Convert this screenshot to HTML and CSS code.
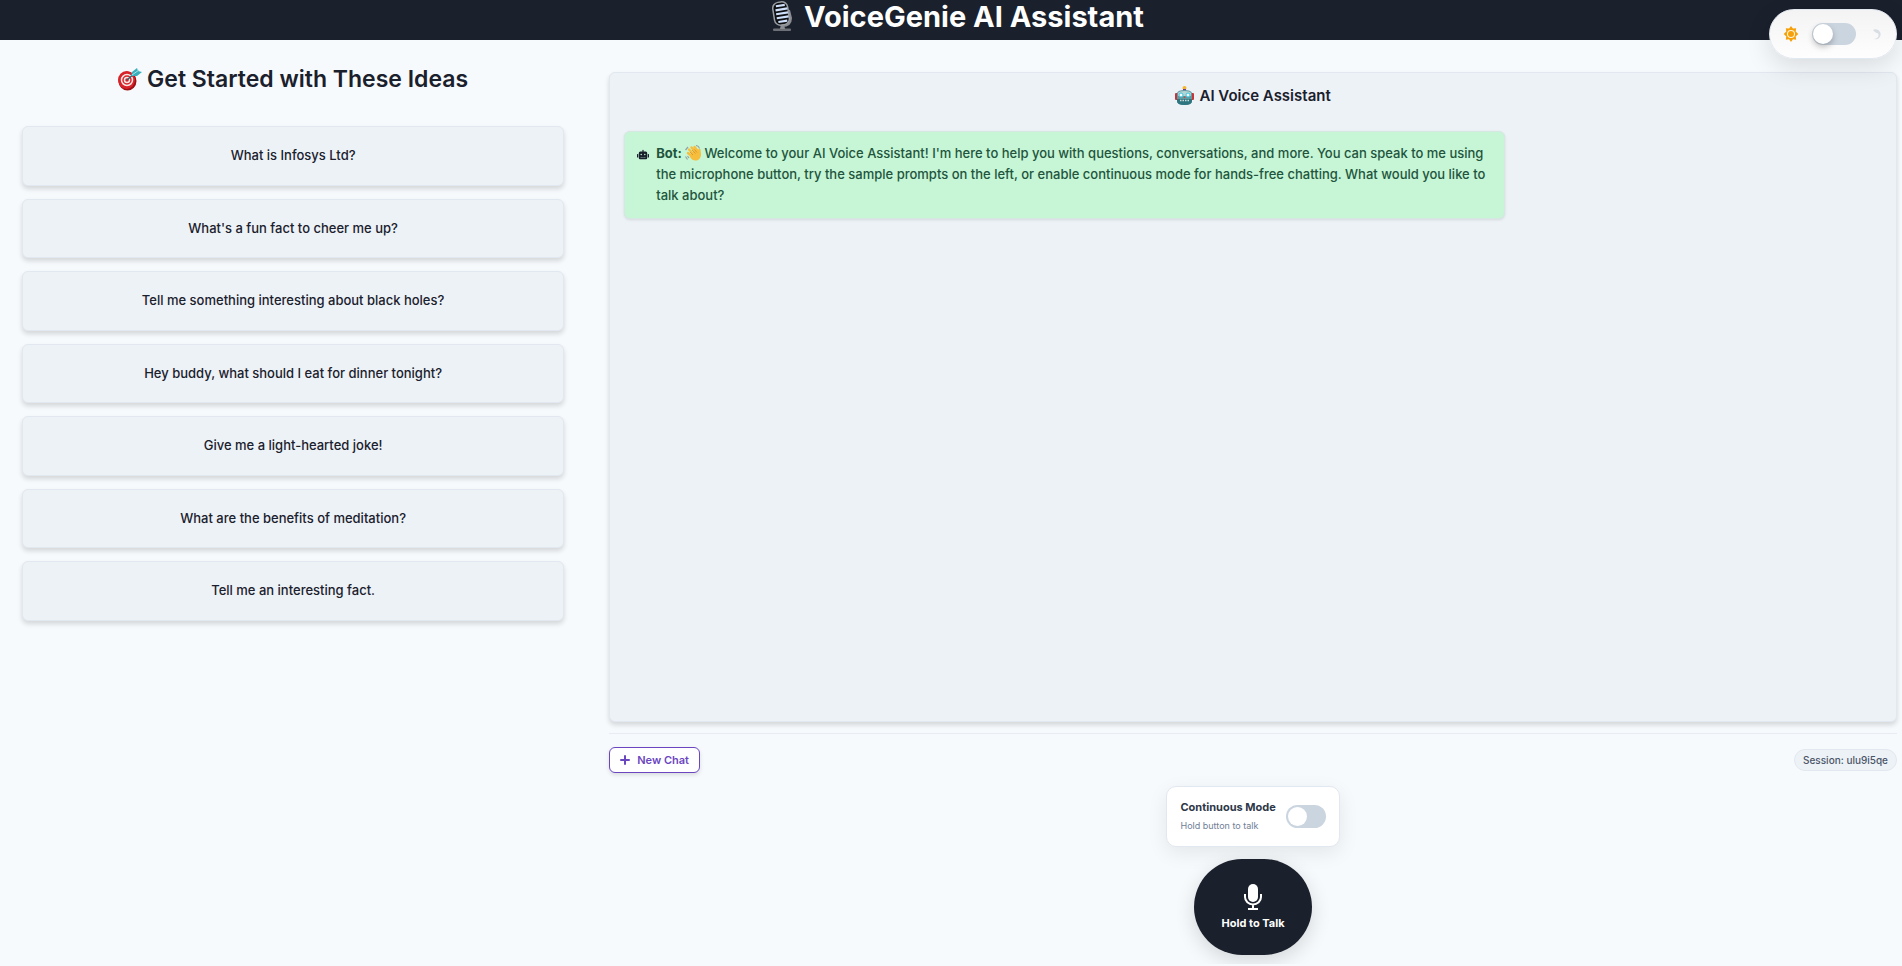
FILE: index.html
```html
<!DOCTYPE html>
<html lang="en">
<head>
<meta charset="utf-8">
<meta name="viewport" content="width=device-width, initial-scale=1">
<title>VoiceGenie AI Assistant</title>
<link rel="stylesheet" href="styles.css">
</head>
<body>
<header class="site-header">
  <h1 class="site-title">
    <svg class="icon-studio" viewBox="0 0 20 30" aria-hidden="true">
      <rect x="1" y="27.500" width="18" height="2.500" rx="1" fill="#6d7076"/>
      <path d="M9 23h3l1 5H8z" fill="#8b8e93"/>
      <path d="M17 9l2 8q0 8-9 8" fill="none" stroke="#8b8e93" stroke-width="2"/>
      <g transform="rotate(-9 9 12)">
        <rect x="1.500" y="1" width="15" height="23" rx="6" fill="#0d0f13" stroke="#9b9fa4" stroke-width="1.500"/>
        <path d="M5 4.500h9M4 8.500h12M4 12.500h12M4 16.500h12M5 20.500h9" fill="none" stroke="#cfe0fa" stroke-width="2.200"/>
      </g>
    </svg>
    <span>VoiceGenie AI Assistant</span>
  </h1>
</header>

<div class="theme-switch">
  <svg class="icon-theme" viewBox="0 0 512 512" aria-hidden="true">
    <path fill="#f6a10b" d="M256 0l62 83 103-14-15 104 83 83-83 83 15 103-103-15-62 83-62-83-104 15 15-103-83-83 83-83-15-104 104 14z"/>
    <circle cx="256" cy="256" r="112" fill="none" stroke="#fff6e0" stroke-width="34"/>
  </svg>
  <input class="toggle toggle-theme" type="checkbox" aria-label="Dark theme">
  <svg class="icon-theme icon-moon" viewBox="0 0 16 16" aria-hidden="true"><path fill="#a0aec0" d="M4 4a5 5 0 1 1 1 9q6-1 4-6-2 1-5-3z"/></svg>
</div>

<main class="layout">
  <section class="ideas">
    <h2 class="ideas-title">
      <svg class="icon-target" viewBox="0 0 24 24" aria-hidden="true">
        <ellipse cx="9.500" cy="14" rx="9" ry="9.500" fill="#9d1016"/>
        <ellipse cx="8.500" cy="13" rx="8.500" ry="9" fill="#d9232a"/>
        <circle cx="9" cy="13" r="5.500" fill="none" stroke="#f4e9e6" stroke-width="1.500"/>
        <circle cx="9" cy="13" r="2.500" fill="none" stroke="#f4e9e6" stroke-width="1.500"/>
        <path d="M9 13l8-7" stroke="#34606b" stroke-width="1.500"/>
        <path d="M13 9l1-4 5-4 1 3 4 1-5 4z" fill="#3aaebc"/>
        <path d="M14 8l7-5" stroke="#a4e4e8"/>
      </svg>
      <span>Get Started with These Ideas</span>
    </h2>
    <div class="prompts">
      <button class="prompt" type="button">What is Infosys Ltd?</button>
      <button class="prompt" type="button">What's a fun fact to cheer me up?</button>
      <button class="prompt" type="button">Tell me something interesting about black holes?</button>
      <button class="prompt" type="button">Hey buddy, what should I eat for dinner tonight?</button>
      <button class="prompt" type="button">Give me a light-hearted joke!</button>
      <button class="prompt" type="button">What are the benefits of meditation?</button>
      <button class="prompt" type="button">Tell me an interesting fact.</button>
    </div>
  </section>

  <section class="chat">
    <div class="chat-panel">
      <h3 class="chat-title">
        <svg class="icon-robot" viewBox="0 0 19 19" aria-hidden="true">
          <rect y="7" width="3" height="7" rx="1" fill="#c9343b"/><rect x="16" y="7" width="3" height="7" rx="1" fill="#c9343b"/>
          <circle cx="9.500" cy="2" r="2" fill="#f3b62f"/><rect x="8" y="3" width="3" height="2" fill="#6c3f8c"/>
          <path d="M2 7q1-3 7.500-3T17 7v8q0 4-7.500 4T2 15z" fill="#5f9aa1"/>
          <path d="M3 7q1-2 6.500-2T16 7v3H3z" fill="#b5d3d3"/>
          <path d="M2 13h15v2q0 4-7.500 4T2 15z" fill="#2d7680"/>
          <circle cx="6" cy="9" r="2" fill="#fff" stroke="#32c4dc"/><circle cx="13" cy="9" r="2" fill="#fff" stroke="#32c4dc"/>
          <path d="M8.500 12l1-2 1 2z" fill="#d8413e"/><path d="M5 14.500h9" stroke="#d3dcdb" stroke-width="1.500" stroke-dasharray="1.500 1"/>
        </svg>
        <span>AI Voice Assistant</span>
      </h3>
      <article class="message">
        <svg class="icon-bot" viewBox="0 0 640 512" aria-hidden="true"><path fill="#1a202c" fill-rule="evenodd" d="M32 224h32v192H32a32 32 0 0 1-32-32V256a32 32 0 0 1 32-32zm512 48v176a64 64 0 0 1-64 64H160a64 64 0 0 1-64-64V176a80 80 0 0 1 80-80h112V32a32 32 0 0 1 64 0v64h112a80 80 0 0 1 80 80zM264 256a40 40 0 1 0-80 0 40 40 0 0 0 80 0zm-8 128h-64v32h64zm96 0h-64v32h64zm104-128a40 40 0 1 0-80 0 40 40 0 0 0 80 0zm-8 128h-64v32h64zm192-128v128a32 32 0 0 1-32 32h-32V224h32a32 32 0 0 1 32 32z"/></svg>
        <p class="message-text"><strong>Bot:</strong>
          <svg class="icon-wave" viewBox="0 0 16 16" aria-hidden="true">
            <path d="M.5 5L3 2M11 .5q3 .5 3.500 3M.5 11.500l2 3M2.500 11l1.500 2" fill="none" stroke="#94a3a3" stroke-width="1.200"/>
            <path d="M4 4.500l5 5M6.500 2.500l5 5.500M9.500 2l4 5M3 8l5 4" stroke="#f7bd3c" stroke-width="2.400" stroke-linecap="round"/>
            <path d="M5 10l6-5 2 2 .5-3q2-1 2 1l.5 4q0 4-3 6-5 2-8-3z" fill="#f7bd3c"/>
            <path d="M5 7l3 3M7 5l3.500 3.500M9.500 4.500L12 7.500" stroke="#c9801f" stroke-width=".6"/>
          </svg>Welcome to your AI Voice Assistant! I'm here to help you with questions, conversations, and more. You can speak to me using the microphone button, try the sample prompts on the left, or enable continuous mode for hands-free chatting. What would you like to talk about?</p>
      </article>
    </div>

    <div class="chat-bar">
      <button class="new-chat" type="button">
        <svg class="icon-plus" viewBox="0 0 10 10" aria-hidden="true"><path d="M5 1v8M1 5h8" stroke="currentColor" stroke-width="2" stroke-linecap="round"/></svg>
        <span>New Chat</span>
      </button>
      <span class="session">Session: ulu9i5qe</span>
    </div>

    <div class="controls">
      <div class="mode-card">
        <label class="mode-label" for="continuous">
          <span class="mode-name">Continuous Mode</span>
          <span class="mode-hint">Hold button to talk</span>
        </label>
        <input class="toggle toggle-mode" id="continuous" type="checkbox">
      </div>
      <button class="talk" type="button">
        <svg class="icon-mic" viewBox="0 0 18 26" aria-hidden="true">
          <rect x="4" width="10" height="18" rx="5" fill="#fff"/>
          <path d="M1 10v3a8 7.500 0 0 0 16 0v-3M9 21v4M4 25h10" fill="none" stroke="#fff" stroke-width="2"/>
        </svg>
        <span>Hold to Talk</span>
      </button>
    </div>
  </section>
</main>
</body>
</html>
```
FILE: styles.css
```css
* {
  box-sizing: border-box;
}

body {
  margin: 0;
  background: #f7fafc;
  color: #1a202c;
  font-family: Inter, "Liberation Sans", sans-serif;
  font-size: 13px;
}

h1, h2, h3, p {
  margin: 0;
}

button {
  font-family: inherit;
  cursor: pointer;
}

svg {
  flex: none;
}

.site-header {
  display: flex;
  justify-content: center;
  height: 40px;
  padding-left: 14px;
  background: #1a202c;
  color: #fff;
}

.site-title {
  display: flex;
  align-items: center;
  gap: 12px;
  height: 32px;
  font-size: 29px;
  font-weight: 700;
}

.icon-studio {
  width: 20px;
  height: 30px;
}

.theme-switch {
  position: fixed;
  top: 9px;
  right: 5px;
  display: flex;
  align-items: center;
  gap: 13px;
  width: 128px;
  height: 50px;
  padding: 0 13px;
  border: 1px solid #e2e8f0;
  border-radius: 25px;
  background: linear-gradient(#f3f3f3, #fefefe);
  box-shadow: 0 8px 26px rgba(0, 0, 0, 0.12);
}

.icon-theme {
  width: 16px;
  height: 16px;
}

.icon-moon {
  opacity: 0.35;
}

.toggle {
  position: relative;
  flex: none;
  margin: 0;
  border-radius: 12px;
  background: #cbd5e0;
  appearance: none;
  cursor: pointer;
}

.toggle::before {
  content: "";
  position: absolute;
  border-radius: 50%;
  background: #fff;
}

.toggle-theme {
  width: 44px;
  height: 22px;
}

.toggle-theme::before {
  top: 1px;
  left: 1px;
  width: 20px;
  height: 20px;
  box-shadow: 0 3px 6px rgba(0, 0, 0, 0.25);
}

.toggle-mode {
  width: 40px;
  height: 23px;
}

.toggle-mode::before {
  top: 2px;
  left: 2px;
  width: 19px;
  height: 19px;
}

.layout {
  display: grid;
  grid-template-columns: 8fr 19fr;
  gap: 45px;
  padding: 0 5px 9px 22px;
}

.ideas-title {
  display: flex;
  align-items: center;
  justify-content: center;
  gap: 5px;
  height: 40px;
  margin: 19px 0 27px;
  font-size: 23px;
  font-weight: 600;
}

.icon-target {
  width: 24px;
  height: 24px;
}

.prompts {
  display: grid;
  gap: 13px;
}

.prompt {
  padding: 19px 20px;
  border: 1px solid #e2e8f0;
  border-radius: 6px;
  background: #edf2f7;
  box-shadow: 0 3px 5px rgba(0, 0, 0, 0.14);
  color: #1a202c;
  font-size: 13px;
  font-weight: 500;
  line-height: 1.5;
}

.chat {
  padding-top: 32px;
}

.chat-panel {
  min-height: 650px;
  padding: 12px 14px;
  border: 1px solid #e2e8f0;
  border-radius: 6px;
  background: #edf2f7;
  box-shadow: 0 3px 5px rgba(0, 0, 0, 0.14);
}

.chat-title {
  display: flex;
  align-items: center;
  justify-content: center;
  gap: 5px;
  height: 20px;
  margin-bottom: 26px;
  font-size: 15px;
  font-weight: 600;
}

.icon-robot {
  width: 19px;
  height: 19px;
}

.message {
  display: flex;
  gap: 7px;
  width: 70%;
  padding: 11px 12px 13px;
  border: 1px solid #d5e8e2;
  border-radius: 6px;
  background: #c6f6d5;
  box-shadow: 0 1px 3px rgba(0, 0, 0, 0.1);
  color: #22543d;
}

.icon-bot {
  width: 12px;
  height: 11px;
  margin-top: 6px;
}

.message-text {
  font-weight: 500;
  line-height: 1.6;
}

.icon-wave {
  width: 16px;
  height: 16px;
  margin-right: 3px;
  vertical-align: -3px;
}

.chat-bar {
  display: flex;
  align-items: center;
  justify-content: space-between;
  margin-top: 11px;
  padding-top: 13px;
  border-top: 1px solid #e8edf3;
}

.new-chat {
  display: flex;
  align-items: center;
  gap: 7px;
  height: 26px;
  padding: 0 10px;
  border: 1px solid #6b46c1;
  border-radius: 6px;
  background: #fff;
  box-shadow: 0 2px 4px rgba(0, 0, 0, 0.12);
  color: #6b46c1;
  font-size: 11px;
  font-weight: 600;
}

.icon-plus {
  width: 10px;
  height: 10px;
}

.session {
  padding: 3px 8px;
  border: 1px solid #e2e8f0;
  border-radius: 11px;
  background: #edf2f7;
  color: #4a5568;
  font-size: 10px;
  font-weight: 500;
  line-height: 14px;
}

.controls {
  display: flex;
  flex-direction: column;
  align-items: center;
  gap: 12px;
  margin-top: 13px;
}

.mode-card {
  display: flex;
  align-items: center;
  gap: 10px;
  height: 61px;
  padding: 0 13px;
  border: 1px solid #e2e8f0;
  border-radius: 10px;
  background: #fff;
  box-shadow: 0 6px 20px rgba(0, 0, 0, 0.08);
}

.mode-label {
  display: grid;
  gap: 2px;
  padding-bottom: 2px;
}

.mode-name {
  color: #2d3748;
  font-size: 11px;
  font-weight: 700;
  line-height: 18px;
}

.mode-hint {
  color: #718096;
  font-size: 9px;
  line-height: 15px;
}

.talk {
  display: flex;
  flex-direction: column;
  align-items: center;
  justify-content: center;
  gap: 6px;
  width: 118px;
  height: 96px;
  border: 0;
  border-radius: 48px;
  background: #1a202c;
  box-shadow: 0 6px 20px rgba(0, 0, 0, 0.14);
  color: #fff;
  font-size: 11px;
  font-weight: 700;
}

.icon-mic {
  width: 18px;
  height: 26px;
}
```
